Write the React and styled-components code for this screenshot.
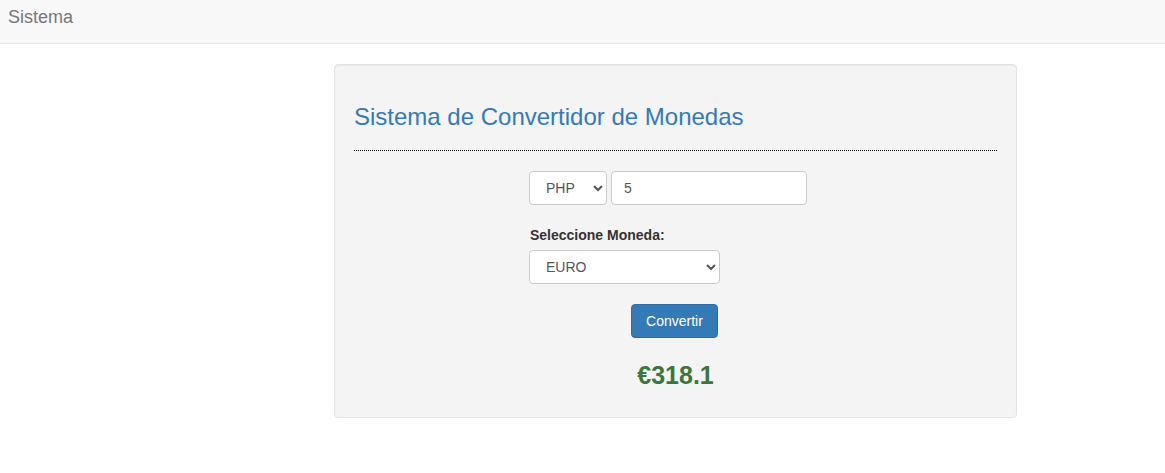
import React, { useState } from "react";
import styled, { createGlobalStyle } from "styled-components";

const GlobalStyle = createGlobalStyle`
  * { box-sizing: border-box; }
  body {
    margin: 0;
    font-family: "Liberation Sans", Arial, sans-serif;
    font-size: 14px;
    line-height: 1.42857;
    color: #333;
    background: #fff;
  }
`;

const Navbar = styled.nav`
  height: 44px;
  background-color: #f8f8f8;
  border-bottom: 1px solid #e7e7e7;
  display: flex;
  align-items: center;
  padding: 0 8px;
`;

const Brand = styled.span`
  font-size: 18px;
  color: #777;
  margin-top: -7px;
`;

const Page = styled.main`
  padding: 20px 0 0 334px;
`;

const Well = styled.section`
  width: 683px;
  padding: 19px;
  background-color: #f4f4f4;
  border: 1px solid #e3e3e3;
  border-radius: 4px;
  box-shadow: inset 0 1px 1px rgba(0, 0, 0, 0.05);
`;

const Title = styled.h3`
  margin: 20px 0 0;
  font-size: 24px;
  font-weight: 400;
  line-height: 1.1;
  color: #337ab7;
`;

const Rule = styled.hr`
  margin: 20px 0;
  border: 0;
  border-top: 1px dotted #000;
`;

const Form = styled.form`
  padding-left: 175px;
`;

const Row = styled.div`
  display: flex;
  gap: 4px;
  margin-bottom: 20px;
`;

const Label = styled.label`
  display: block;
  font-weight: 700;
  line-height: 20px;
  margin: 0 0 5px 1px;
`;

const Select = styled.select`
  height: 34px;
  width: ${(p) => p.$width}px;
  padding: 6px 8px 6px 12px;
  font-family: inherit;
  font-size: 14px;
  color: #555;
  background-color: #fff;
  border: 1px solid #ccc;
  border-radius: 4px;
`;

const Input = styled.input`
  height: 34px;
  width: 196px;
  padding: 6px 12px;
  font-family: inherit;
  font-size: 14px;
  color: #555;
  background-color: #fff;
  border: 1px solid #ccc;
  border-radius: 4px;
`;

const Actions = styled.div`
  display: flex;
  justify-content: center;
  margin-top: 20px;
`;

const Button = styled.button`
  height: 34px;
  padding: 6px 14px;
  font-family: inherit;
  font-size: 14px;
  color: #fff;
  background-color: #337ab7;
  border: 1px solid #2e6da4;
  border-radius: 4px;
  margin-left: -2px;
`;

const Result = styled.h3`
  margin: 24px 0 8px;
  text-align: center;
  font-size: 25px;
  font-weight: 700;
  line-height: 1.1;
  color: #3c763d;
`;

export default function App() {
  const [from, setFrom] = useState("PHP");
  const [amount, setAmount] = useState("5");
  const [to, setTo] = useState("EURO");

  return (
    <>
      <GlobalStyle />
      <Navbar>
        <Brand>Sistema</Brand>
      </Navbar>
      <Page>
        <Well>
          <Title>Sistema de Convertidor de Monedas</Title>
          <Rule />
          <Form onSubmit={(e) => e.preventDefault()}>
            <Row>
              <Select $width={78} value={from} onChange={(e) => setFrom(e.target.value)}>
                <option>PHP</option>
                <option>USD</option>
              </Select>
              <Input value={amount} onChange={(e) => setAmount(e.target.value)} />
            </Row>
            <Label>Seleccione Moneda:</Label>
            <Select $width={191} value={to} onChange={(e) => setTo(e.target.value)}>
              <option>EURO</option>
              <option>DOLAR</option>
            </Select>
          </Form>
          <Actions>
            <Button type="button">Convertir</Button>
          </Actions>
          <Result>€318.1</Result>
        </Well>
      </Page>
    </>
  );
}
